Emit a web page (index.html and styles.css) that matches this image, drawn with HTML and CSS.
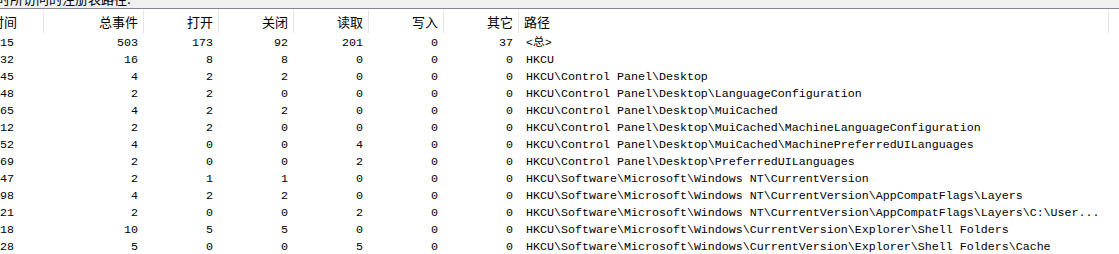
FILE: index.html
```html
<!DOCTYPE html>
<html lang="zh">
<head>
<meta charset="utf-8">
<link rel="stylesheet" href="styles.css">
</head>
<body>
<div class="strip"><div class="strip-text">时所访问的注册表路径:</div></div>
<div class="list">
  <div class="row head">
    <div class="c c1">时间</div>
    <div class="c num">总事件</div>
    <div class="c num">打开</div>
    <div class="c num">关闭</div>
    <div class="c num">读取</div>
    <div class="c num">写入</div>
    <div class="c num">其它</div>
    <div class="c path">路径</div>
  </div>
  <div class="row"><div class="c c1">15</div><div class="c num">503</div><div class="c num">173</div><div class="c num">92</div><div class="c num">201</div><div class="c num">0</div><div class="c num">37</div><div class="c path">&lt;总&gt;</div></div>
  <div class="row"><div class="c c1">32</div><div class="c num">16</div><div class="c num">8</div><div class="c num">8</div><div class="c num">0</div><div class="c num">0</div><div class="c num">0</div><div class="c path">HKCU</div></div>
  <div class="row"><div class="c c1">45</div><div class="c num">4</div><div class="c num">2</div><div class="c num">2</div><div class="c num">0</div><div class="c num">0</div><div class="c num">0</div><div class="c path">HKCU\Control Panel\Desktop</div></div>
  <div class="row"><div class="c c1">48</div><div class="c num">2</div><div class="c num">2</div><div class="c num">0</div><div class="c num">0</div><div class="c num">0</div><div class="c num">0</div><div class="c path">HKCU\Control Panel\Desktop\LanguageConfiguration</div></div>
  <div class="row"><div class="c c1">65</div><div class="c num">4</div><div class="c num">2</div><div class="c num">2</div><div class="c num">0</div><div class="c num">0</div><div class="c num">0</div><div class="c path">HKCU\Control Panel\Desktop\MuiCached</div></div>
  <div class="row"><div class="c c1">12</div><div class="c num">2</div><div class="c num">2</div><div class="c num">0</div><div class="c num">0</div><div class="c num">0</div><div class="c num">0</div><div class="c path">HKCU\Control Panel\Desktop\MuiCached\MachineLanguageConfiguration</div></div>
  <div class="row"><div class="c c1">52</div><div class="c num">4</div><div class="c num">0</div><div class="c num">0</div><div class="c num">4</div><div class="c num">0</div><div class="c num">0</div><div class="c path">HKCU\Control Panel\Desktop\MuiCached\MachinePreferredUILanguages</div></div>
  <div class="row"><div class="c c1">69</div><div class="c num">2</div><div class="c num">0</div><div class="c num">0</div><div class="c num">2</div><div class="c num">0</div><div class="c num">0</div><div class="c path">HKCU\Control Panel\Desktop\PreferredUILanguages</div></div>
  <div class="row"><div class="c c1">47</div><div class="c num">2</div><div class="c num">1</div><div class="c num">1</div><div class="c num">0</div><div class="c num">0</div><div class="c num">0</div><div class="c path">HKCU\Software\Microsoft\Windows NT\CurrentVersion</div></div>
  <div class="row"><div class="c c1">98</div><div class="c num">4</div><div class="c num">2</div><div class="c num">2</div><div class="c num">0</div><div class="c num">0</div><div class="c num">0</div><div class="c path">HKCU\Software\Microsoft\Windows NT\CurrentVersion\AppCompatFlags\Layers</div></div>
  <div class="row"><div class="c c1">21</div><div class="c num">2</div><div class="c num">0</div><div class="c num">0</div><div class="c num">2</div><div class="c num">0</div><div class="c num">0</div><div class="c path">HKCU\Software\Microsoft\Windows NT\CurrentVersion\AppCompatFlags\Layers\C:\User...</div></div>
  <div class="row"><div class="c c1">18</div><div class="c num">10</div><div class="c num">5</div><div class="c num">5</div><div class="c num">0</div><div class="c num">0</div><div class="c num">0</div><div class="c path">HKCU\Software\Microsoft\Windows\CurrentVersion\Explorer\Shell Folders</div></div>
  <div class="row"><div class="c c1">28</div><div class="c num">5</div><div class="c num">0</div><div class="c num">0</div><div class="c num">5</div><div class="c num">0</div><div class="c num">0</div><div class="c path">HKCU\Software\Microsoft\Windows\CurrentVersion\Explorer\Shell Folders\Cache</div></div>
</div>
</body>
</html>
```

FILE: styles.css
```css
html, body {
  margin: 0;
  padding: 0;
  background: #ffffff;
  overflow: hidden;
}
body {
  width: 1119px;
  height: 254px;
}
.strip {
  height: 8px;
  background: #f0f0f0;
  border-bottom: 1px solid #828790;
  overflow: hidden;
}
.strip-text {
  margin-top: -8px;
  margin-left: -3px;
  font-family: "Noto Sans CJK SC", sans-serif;
  font-size: 13px;
  line-height: 13px;
  color: #000;
  white-space: nowrap;
}
.list {
  margin-left: -30px;
}
.row {
  display: grid;
  grid-template-columns: 74px 100px 75px 75px 75px 75px 75px 590px;
  height: 17px;
  padding-top: 1px;
  box-sizing: border-box;
  font-family: "Liberation Mono", "Noto Sans CJK SC", monospace;
  font-size: 11.67px;
  line-height: 17px;
  color: #000;
  white-space: nowrap;
}
.row.head {
  height: 25px;
  padding: 1px 0;
  font-family: "Noto Sans CJK SC", sans-serif;
  font-size: 13px;
  line-height: 24px;
  color: #000;
}
.c {
  overflow: hidden;
}
.head .c {
  border-right: 1px solid #e5e5e5;
}
.c1 {
  padding-left: 30px;
}
.head .c1 {
  padding-left: 21px;
}
.num {
  text-align: right;
  padding-right: 6px;
}
.head .num {
  padding-right: 5px;
}
.path {
  padding-left: 7px;
}
.head .path {
  padding-left: 5px;
}
```
